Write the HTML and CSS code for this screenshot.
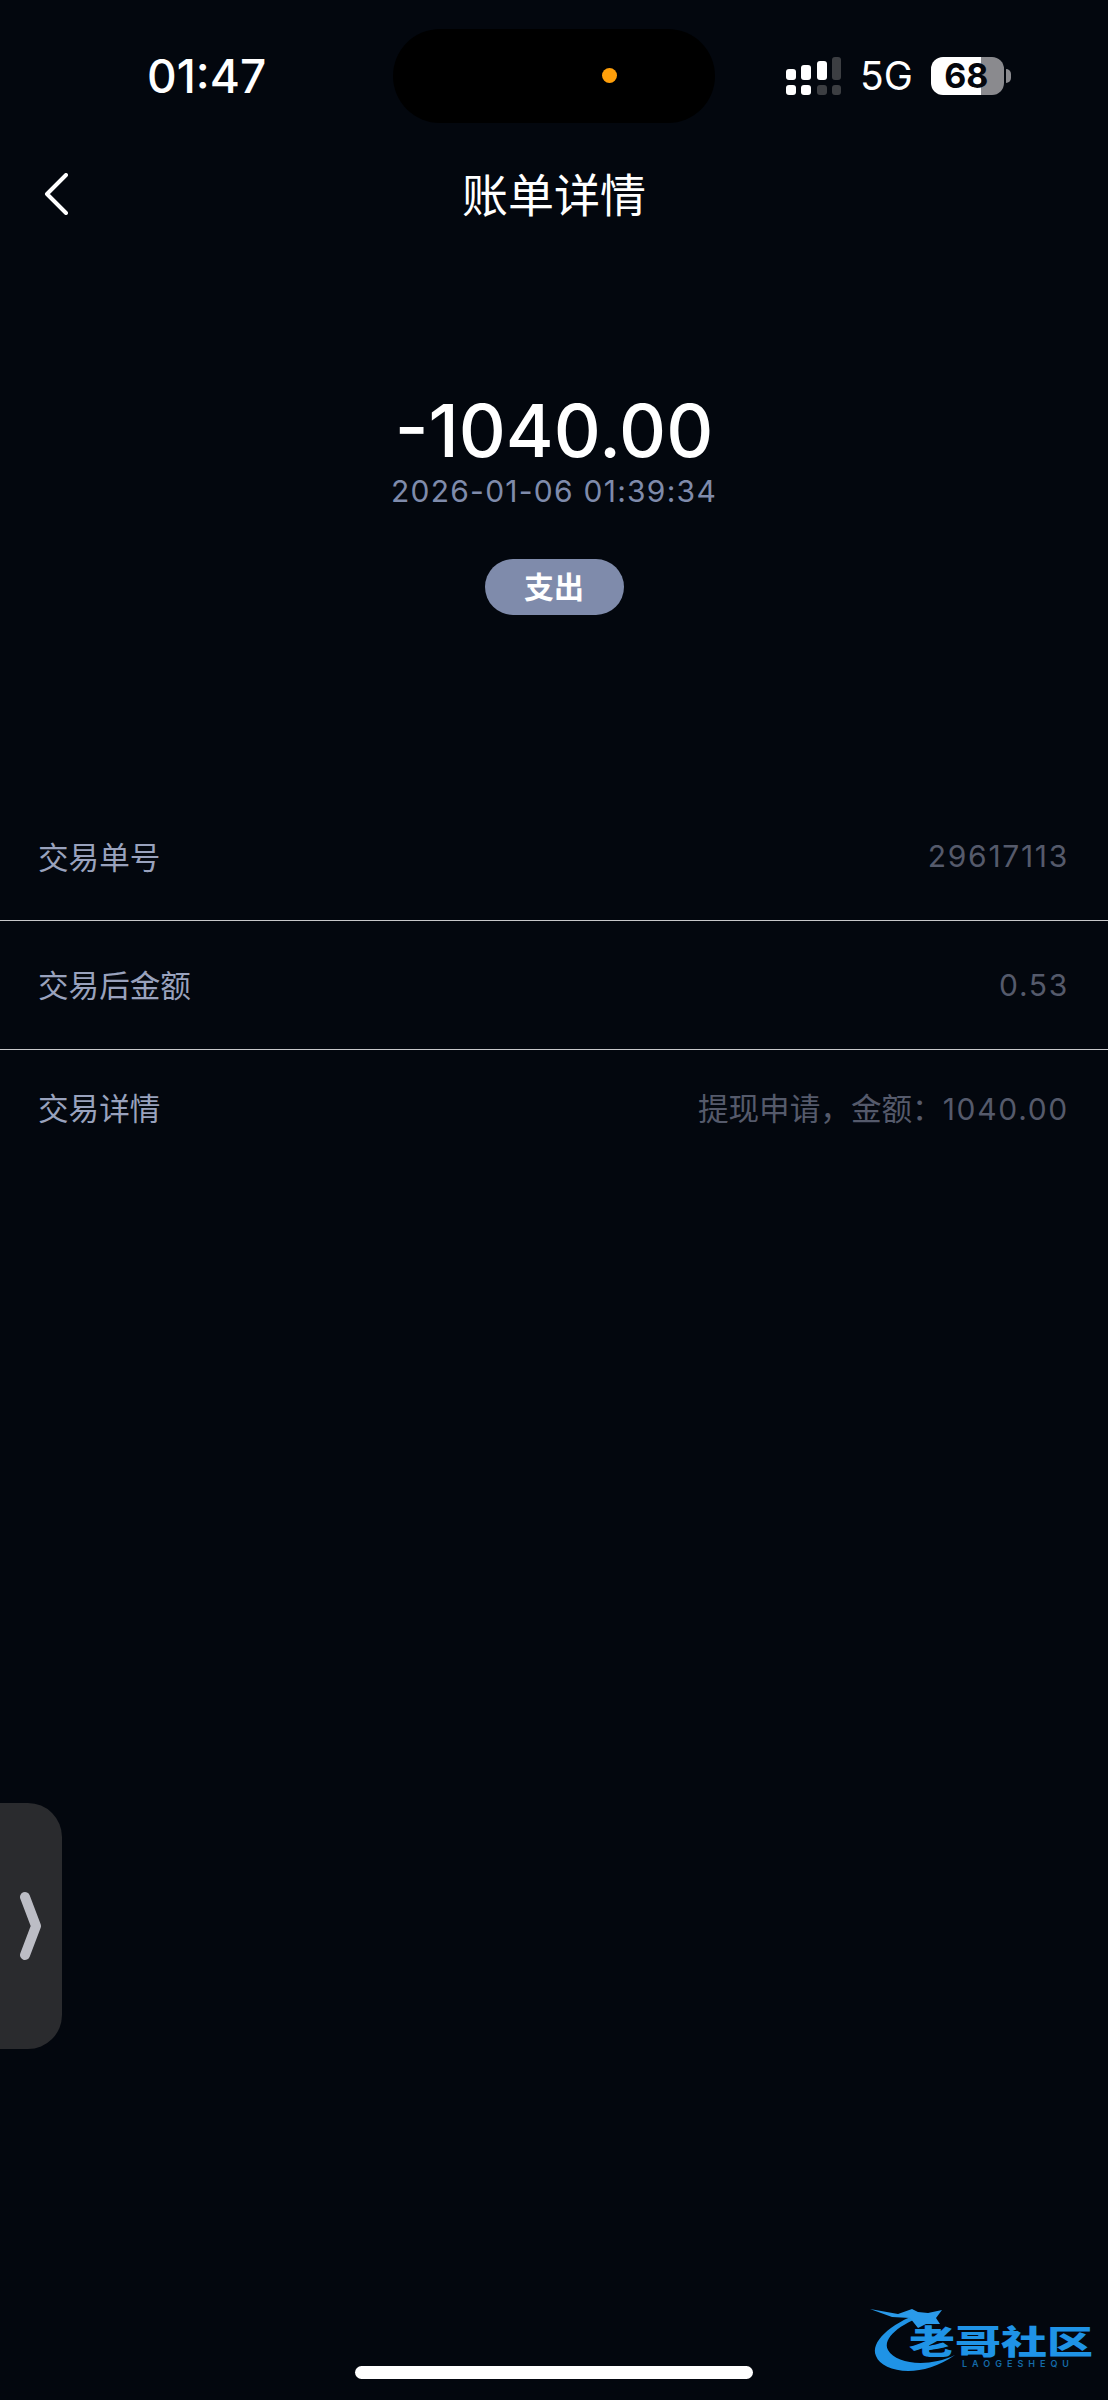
FILE: index.html
```html
<!DOCTYPE html>
<html lang="zh">

<head>
    <meta charset="utf-8">
    <title>账单详情</title>
    <link rel="stylesheet" href="styles.css">
</head>

<body>
    <div class="page">
        <div class="status-bar">
            <div class="status-time">01:47</div>
            <div class="island"><span class="island-dot"></span></div>
            <div class="status-right">
                <svg class="signal" width="56" height="38" viewBox="0 0 56 38">
                    <rect x="0" y="12" width="10" height="11" rx="3" fill="#fff"/>
                    <rect x="15" y="8" width="10" height="15" rx="3" fill="#fff"/>
                    <rect x="31" y="4" width="10" height="19" rx="3" fill="#fff"/>
                    <rect x="46" y="0" width="9" height="23" rx="3" fill="#3c3e42"/>
                    <rect x="0" y="28" width="10" height="10" rx="3" fill="#fff"/>
                    <rect x="15" y="28" width="10" height="10" rx="3" fill="#fff"/>
                    <rect x="31" y="28" width="10" height="10" rx="3" fill="#3c3e42"/>
                    <rect x="46" y="28" width="9" height="10" rx="3" fill="#3c3e42"/>
                </svg>
                <span class="network">5G</span>
                <div class="battery"><span class="battery-level">68</span></div>
                <span class="battery-nub"></span>
            </div>
        </div>

        <div class="nav">
            <svg class="nav-back" width="24" height="42" viewBox="0 0 24 42">
                <path d="M22 2 L3 21 L22 40" fill="none" stroke="#fff" stroke-width="4" stroke-linecap="round" stroke-linejoin="round"/>
            </svg>
            <h1 class="nav-title">账单详情</h1>
        </div>

        <div class="summary">
            <div class="amount">-1040.00</div>
            <div class="date">2026-01-06 01:39:34</div>
            <div class="tag">支出</div>
        </div>

        <div class="rows">
            <div class="row">
                <span class="row-label">交易单号</span>
                <span class="row-value"><span class="row-num">29617113</span></span>
            </div>
            <div class="row">
                <span class="row-label">交易后金额</span>
                <span class="row-value"><span class="row-num">0.53</span></span>
            </div>
            <div class="row">
                <span class="row-label">交易详情</span>
                <span class="row-value">提现申请，金额：<span class="row-num">1040.00</span></span>
            </div>
        </div>

        <div class="side-handle">
            <svg width="24" height="70" viewBox="0 0 24 70">
                <path d="M6 6 L17 35 L6 64" fill="none" stroke="#bcbdc5" stroke-width="10" stroke-linecap="round" stroke-linejoin="round"/>
            </svg>
        </div>

        <div class="home-bar"></div>

        <div class="logo">
            <svg class="logo-dragon" width="100" height="80" viewBox="0 0 100 80">
                <path d="M52 13 C22 24 2 42 8 56 C14 72 52 80 87 55 C60 68 28 64 20 50 C14 38 32 24 58 15 Z" fill="#1f93e6"/>
                <path d="M2 9 L30 14 L44 9 L50 12 L60 13 L74 10 L68 18 L72 24 L58 24 L50 28 L42 18 L24 17 Z" fill="#2a9aea"/>
            </svg>
            <div class="logo-name">老哥社区</div>
            <div class="logo-sub">LAOGESHEQU</div>
        </div>
    </div>
</body>

</html>
```

FILE: styles.css
```css
body {
    margin: 0;
    background-color: #03070e;
    font-family: Inter, "Noto Sans CJK SC", sans-serif;
    color: white;
}

.page {
    position: relative;
    width: 1108px;
    height: 2400px;
    overflow: hidden;
}

.status-bar {
    display: grid;
    grid-template-columns: 393px 322px 1fr;
    align-items: center;
    padding-top: 29px;
}

.status-time {
    padding-left: 147px;
    font-size: 46px;
    font-weight: 500;
    line-height: 54px;
}

.island {
    position: relative;
    height: 94px;
    background-color: black;
    border-radius: 47px;
}

.island-dot {
    position: absolute;
    top: 39px;
    left: 209px;
    width: 15px;
    height: 15px;
    border-radius: 50%;
    background-color: #ff9f0a;
}

.status-right {
    display: flex;
    align-items: center;
    padding-left: 71px;
}

.signal {
    margin-right: 18px;
}

.network {
    font-size: 39px;
    line-height: 46px;
    margin-right: 18px;
}

.battery {
    width: 73px;
    height: 38px;
    border-radius: 12px;
    background: linear-gradient(to right, #fff 50px, #8a8a8e 50px);
    color: #05070d;
    font-size: 34px;
    font-weight: 700;
    line-height: 38px;
    text-align: center;
}

.battery-level {
    display: block;
    margin-left: -2px;
}

.battery-nub {
    width: 5px;
    height: 14px;
    margin-left: 2px;
    border-radius: 0 5px 5px 0;
    background-color: #8a8a8e;
}

.nav {
    display: flex;
    align-items: center;
    justify-content: center;
    position: relative;
    height: 142px;
}

.nav-back {
    position: absolute;
    left: 44px;
    top: 50px;
}

.nav-title {
    margin: 0 0 4px;
    font-size: 46px;
    font-weight: 400;
}

.summary {
    display: flex;
    flex-direction: column;
    align-items: center;
    padding-top: 124px;
}

.amount {
    font-size: 73px;
    font-weight: 500;
    line-height: 84px;
}

.date {
    color: #7f8bab;
    font-size: 30px;
    letter-spacing: 1.25px;
    line-height: 36px;
}

.tag {
    width: 139px;
    height: 56px;
    margin-top: 50px;
    border-radius: 28px;
    background-color: #7f8bab;
    font-size: 30px;
    font-weight: 700;
    line-height: 56px;
    text-align: center;
}

.rows {
    margin-top: 178px;
}

.row {
    display: flex;
    align-items: center;
    justify-content: space-between;
    height: 125px;
    padding: 0 40px 2px 38px;
    border-bottom: 1px solid #c8c8ca;
}

.row:nth-child(2) {
    height: 126px;
}

.row:last-child {
    border-bottom: none;
    height: 114px;
}

.row-label {
    color: #99a2bd;
    font-size: 30.6px;
}

.row-value {
    color: #555a6b;
    font-size: 30.6px;
    white-space: nowrap;
}

.row-num {
    font-size: 30px;
    letter-spacing: 1.7px;
    margin-right: -1px;
}

.side-handle {
    position: absolute;
    left: 0;
    top: 1803px;
    display: flex;
    align-items: center;
    justify-content: flex-end;
    width: 62px;
    height: 246px;
    padding-right: 19px;
    box-sizing: border-box;
    border-radius: 0 34px 34px 0;
    background-color: #2a2b2e;
}

.home-bar {
    position: absolute;
    left: 355px;
    top: 2366px;
    width: 398px;
    height: 13px;
    border-radius: 7px;
    background-color: white;
}

.logo {
    position: absolute;
    left: 868px;
    top: 2300px;
    width: 230px;
    height: 80px;
}

.logo-dragon {
    position: absolute;
    left: 0;
    top: 0;
}

.logo-name {
    position: absolute;
    left: 41px;
    top: 22px;
    color: #1f93e6;
    font-size: 46px;
    font-weight: 900;
    line-height: 40px;
    white-space: nowrap;
    transform: scaleY(0.72);
}

.logo-sub {
    position: absolute;
    left: 94px;
    top: 58px;
    color: #146aa8;
    font-size: 9px;
    font-weight: 600;
    letter-spacing: 5px;
    white-space: nowrap;
}
```
